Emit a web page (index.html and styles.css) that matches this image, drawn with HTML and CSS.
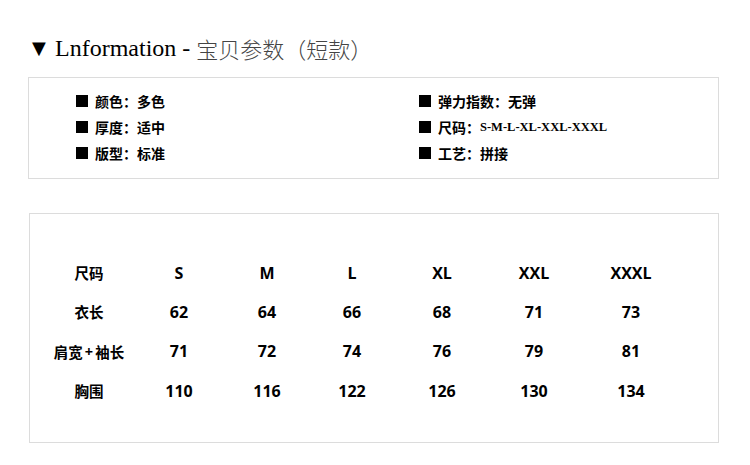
FILE: index.html
```html
<!DOCTYPE html>
<html lang="zh">
<head>
<meta charset="utf-8">
<link rel="stylesheet" href="styles.css">
</head>
<body>
<div class="page">
  <h1 class="title"><span class="tri">▼</span><span>Lnformation - </span><span class="cn">宝贝参数（短款）</span></h1>
  <div class="box params">
    <div class="item"><span class="sq"></span>颜色：多色</div>
    <div class="item"><span class="sq"></span>弹力指数：无弹</div>
    <div class="item"><span class="sq"></span>厚度：适中</div>
    <div class="item"><span class="sq"></span>尺码：<span class="mono">S-M-L-XL-XXL-XXXL</span></div>
    <div class="item"><span class="sq"></span>版型：标准</div>
    <div class="item"><span class="sq"></span>工艺：拼接</div>
  </div>
  <div class="box sizes">
    <div class="grid">
      <div class="c lbl">尺码</div><div class="c">S</div><div class="c">M</div><div class="c">L</div><div class="c">XL</div><div class="c">XXL</div><div class="c">XXXL</div>
      <div class="c lbl">衣长</div><div class="c">62</div><div class="c">64</div><div class="c">66</div><div class="c">68</div><div class="c">71</div><div class="c">73</div>
      <div class="c lbl">肩宽<span class="plus">+</span>袖长</div><div class="c">71</div><div class="c">72</div><div class="c">74</div><div class="c">76</div><div class="c">79</div><div class="c">81</div>
      <div class="c lbl">胸围</div><div class="c">110</div><div class="c">116</div><div class="c">122</div><div class="c">126</div><div class="c">130</div><div class="c">134</div>
    </div>
  </div>
</div>
</body>
</html>
```
FILE: styles.css
```css
html, body { margin: 0; padding: 0; background: #fff; }
* { box-sizing: border-box; }
.page { padding: 33px 0 0 28px; }
.title {
  margin: 0 0 14px 0;
  font-family: "Liberation Serif", "Noto Sans CJK SC", serif;
  font-weight: normal;
  font-size: 24px;
  line-height: 30px;
  color: #000;
  display: flex;
  align-items: center;
  white-space: pre;
}
.tri { font-size: 18px; display: inline-block; width: 23px; margin-left: 4px; font-family: "DejaVu Sans", sans-serif; }
.cn { font-family: "Noto Sans CJK SC", sans-serif; font-weight: 300; font-size: 22px; color: #444; }
.box {
  width: 691px;
  border: 1px solid #dcdcdc;
}
.params {
  display: grid;
  grid-template-columns: 343px 1fr;
  padding: 10px 0 12px 47px;
  font-family: "Noto Sans CJK SC", sans-serif;
  font-weight: 700;
  font-size: 14px;
  line-height: 26px;
  color: #000;
}
.item { display: flex; align-items: center; }
.sq { width: 12px; height: 12px; background: #000; margin-right: 7px; }
.mono { font-family: "Liberation Serif", serif; font-size: 12.5px; font-weight: 700; }
.sizes { margin: 34px 0 0 1px; padding: 39px 0 32px 0; width: 690px; }
.grid {
  display: grid;
  grid-template-columns: 90px 90px 86px 84px 96px 88px 106px;
  grid-auto-rows: 39.3px;
  margin-left: 14px;
}
.c {
  display: flex; align-items: center; justify-content: center;
  font-family: "Open Sans", "Noto Sans CJK SC", sans-serif;
  font-weight: 700;
  font-size: 16px;
  color: #000;
}
.lbl { font-family: "Noto Sans CJK SC", sans-serif; font-size: 14.5px; }
.plus { font-family: "Open Sans", sans-serif; margin: 0 2px; }
```
